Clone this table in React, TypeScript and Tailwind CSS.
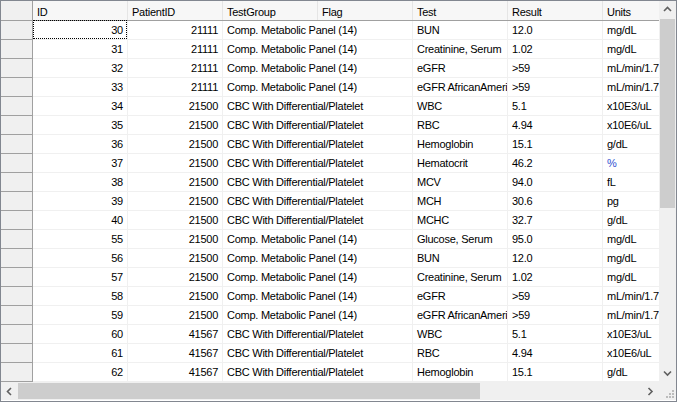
import React from 'react';

type Row = [number, number, string, string, string, string];

const CMP = 'Comp. Metabolic Panel (14)';
const CBC = 'CBC With Differential/Platelet';

// Visible rows of the grid
const rows: Row[] = [
  [30, 21111, CMP, 'BUN', '12.0', 'mg/dL'],
  [31, 21111, CMP, 'Creatinine, Serum', '1.02', 'mg/dL'],
  [32, 21111, CMP, 'eGFR', '>59', 'mL/min/1.73'],
  [33, 21111, CMP, 'eGFR AfricanAmerican', '>59', 'mL/min/1.73'],
  [34, 21500, CBC, 'WBC', '5.1', 'x10E3/uL'],
  [35, 21500, CBC, 'RBC', '4.94', 'x10E6/uL'],
  [36, 21500, CBC, 'Hemoglobin', '15.1', 'g/dL'],
  [37, 21500, CBC, 'Hematocrit', '46.2', '%'],
  [38, 21500, CBC, 'MCV', '94.0', 'fL'],
  [39, 21500, CBC, 'MCH', '30.6', 'pg'],
  [40, 21500, CBC, 'MCHC', '32.7', 'g/dL'],
  [55, 21500, CMP, 'Glucose, Serum', '95.0', 'mg/dL'],
  [56, 21500, CMP, 'BUN', '12.0', 'mg/dL'],
  [57, 21500, CMP, 'Creatinine, Serum', '1.02', 'mg/dL'],
  [58, 21500, CMP, 'eGFR', '>59', 'mL/min/1.73'],
  [59, 21500, CMP, 'eGFR AfricanAmerican', '>59', 'mL/min/1.73'],
  [60, 41567, CBC, 'WBC', '5.1', 'x10E3/uL'],
  [61, 41567, CBC, 'RBC', '4.94', 'x10E6/uL'],
  [62, 41567, CBC, 'Hemoglobin', '15.1', 'g/dL'],
];

const headers = ['ID', 'PatientID', 'TestGroup', 'Flag', 'Test', 'Result', 'Units'];

function Chevron({ dir }: { dir: 'up' | 'down' | 'left' | 'right' }) {
  const d = {
    up: 'M1 5 L4.5 1.5 L8 5',
    down: 'M1 1.5 L4.5 5 L8 1.5',
    left: 'M5 1 L1.5 4.5 L5 8',
    right: 'M1.5 1 L5 4.5 L1.5 8',
  }[dir];
  const horiz = dir === 'left' || dir === 'right';
  return (
    <svg width={horiz ? 7 : 9} height={horiz ? 9 : 7} viewBox={horiz ? '0 0 7 9' : '0 0 9 7'}>
      <path d={d} fill="none" stroke="#606060" strokeWidth="1.6" />
    </svg>
  );
}

function SizeGrip() {
  const dots = [
    [10, 10], [7, 10], [4, 10], [10, 7], [7, 7], [10, 4],
  ];
  return (
    <svg width="14" height="14" viewBox="0 0 14 14">
      {dots.map(([x, y]) => (
        <rect key={`${x}-${y}`} x={x} y={y} width="2" height="2" fill="#BCBCBC" />
      ))}
    </svg>
  );
}

function Cell({ children, right, blue, wide }: { children?: React.ReactNode; right?: boolean; blue?: boolean; wide?: boolean }) {
  return (
    <div
      className={`${wide ? 'w-[190px]' : 'w-[95px]'} shrink-0 h-full border-r border-[#F0F0F0] flex items-center overflow-hidden whitespace-nowrap px-[4px] ${
        right ? 'justify-end' : 'justify-start'
      } ${blue ? 'text-[#3050d0]' : 'text-black'}`}
    >
      {children}
    </div>
  );
}

export default function App() {
  return (
    <div
      className="w-[677px] h-[402px] bg-white border border-[#828790] flex flex-col overflow-hidden text-[11px] tracking-[-0.25px] leading-none"
      style={{ fontFamily: '"Liberation Sans", Arial, sans-serif' }}
    >
      <div className="flex h-[381px] shrink-0">
        {/* grid */}
        <div className="w-[658px] shrink-0 overflow-hidden">
          <div className="flex h-[20px] border-b border-[#A0A0A0] bg-[#F7F7F7]">
            <div className="w-[32px] shrink-0 h-full bg-[#F0F0F0] border-r border-[#A0A0A0]" />
            {headers.map((h) => (
              <div
                key={h}
                className="w-[95px] shrink-0 h-full border-r border-[#E5E5E5] flex items-center pt-[3px] px-[4px] whitespace-nowrap text-black"
              >
                {h}
              </div>
            ))}
          </div>
          {rows.map((r, i) => (
            <div key={r[0]} className="flex h-[19px] border-b border-[#F0F0F0]">
              <div className="w-[32px] shrink-0 h-[19px] -mb-px bg-[#F0F0F0] border-r border-b border-[#A0A0A0]" />
              <div className="relative w-[95px] shrink-0 h-full border-r border-[#F0F0F0] flex items-center justify-end px-[4px]">
                {i === 0 && (
                  <div className="absolute left-0 top-[-1px] right-0 bottom-0 border border-dotted border-black" />
                )}
                {r[0]}
              </div>
              <Cell right>{r[1]}</Cell>
              {/* TestGroup text runs on into the empty Flag column */}
              <Cell wide>{r[2]}</Cell>
              <Cell>{r[3]}</Cell>
              <Cell>{r[4]}</Cell>
              <Cell blue={r[5] === '%'}>{r[5]}</Cell>
            </div>
          ))}
        </div>
        {/* vertical scrollbar */}
        <div className="w-[17px] shrink-0 bg-[#F0F0F0] flex flex-col">
          <div className="h-[17px] flex items-center justify-center">
            <Chevron dir="up" />
          </div>
          <div className="flex-1 px-px">
            <div className="h-[189px] bg-[#CDCDCD] mt-px" />
          </div>
          <div className="h-[17px] flex items-center justify-center">
            <Chevron dir="down" />
          </div>
        </div>
      </div>
      {/* horizontal scrollbar */}
      <div className="flex h-[18px] shrink-0 bg-[#F0F0F0]">
        <div className="w-[658px] shrink-0 flex">
          <div className="w-[17px] shrink-0 flex items-center justify-center">
            <Chevron dir="left" />
          </div>
          <div className="flex-1 py-px">
            <div className="w-[462px] h-full bg-[#CDCDCD]" />
          </div>
          <div className="w-[17px] shrink-0 flex items-center justify-center">
            <Chevron dir="right" />
          </div>
        </div>
        <div className="w-[17px] shrink-0 flex items-end justify-end">
          <SizeGrip />
        </div>
      </div>
    </div>
  );
}
